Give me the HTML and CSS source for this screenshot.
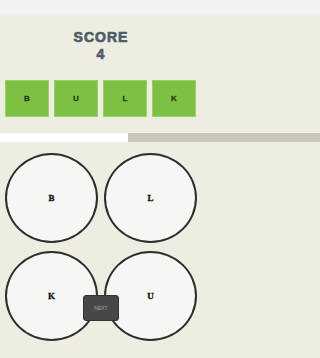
FILE: index.html
```html
<!DOCTYPE html>
<html>
<head>
<meta charset="utf-8">
<link rel="stylesheet" href="styles.css">
</head>
<body>
<div class="app">
  <div class="topbar"></div>
  <div class="score">
    <div class="score-label">SCORE</div>
    <div class="score-value">4</div>
  </div>
  <div class="tiles">
    <div class="tile">B</div>
    <div class="tile">U</div>
    <div class="tile">L</div>
    <div class="tile">K</div>
  </div>
  <div class="progress">
    <div class="progress-fill" style="width:128px"></div>
  </div>
  <div class="board">
    <div class="circle">B</div>
    <div class="circle">L</div>
    <div class="circle">K</div>
    <div class="circle">U</div>
    <div class="next">NEXT</div>
  </div>
</div>
</body>
</html>
```
FILE: styles.css
```css
html, body {
  margin: 0;
  padding: 0;
}
body {
  height: 358px;
  overflow: hidden;
  background: #eeede2;
  font-family: "Liberation Sans", Arial, sans-serif;
}
.app {
  display: flex;
  flex-direction: column;
  height: 358px;
}
.topbar {
  height: 14px;
  background: #f3f2f2;
}
.score {
  width: 202px;
  margin-top: 15px;
  text-align: center;
  color: #4c5d68;
  font-weight: 900;
  font-size: 14px;
  line-height: 17px;
  letter-spacing: 1px;
  -webkit-text-stroke: 0.7px #4c5d68;
}
.tiles {
  margin-top: 17px;
  display: flex;
  gap: 5px;
  padding: 0 5px;
}
.tile {
  width: 44px;
  height: 37px;
  box-sizing: border-box;
  background: #7dc143;
  border: 1px solid #98d061;
  display: flex;
  align-items: center;
  justify-content: center;
  font-size: 8px;
  font-weight: bold;
  color: #2b3a1c;
  -webkit-text-stroke: 0.3px #2b3a1c;
}
.progress {
  margin-top: 16px;
  height: 9px;
  background: #c9c7b9;
  display: flex;
}
.progress-fill {
  background: #ffffff;
  height: 100%;
}
.board {
  position: relative;
  width: 202px;
  box-sizing: border-box;
  margin-top: 11px;
  display: grid;
  grid-template-columns: 93px 93px;
  grid-auto-rows: 90px;
  column-gap: 6px;
  row-gap: 8px;
  padding-left: 5px;
}
.circle {
  box-sizing: border-box;
  border: 2.5px solid #2e2e2e;
  border-radius: 50%;
  background: #f6f6f4;
  display: flex;
  align-items: center;
  justify-content: center;
  font-family: "Liberation Serif", "Times New Roman", serif;
  font-weight: bold;
  font-size: 9px;
  color: #111;
  -webkit-text-stroke: 0.3px #111;
}
.next {
  position: absolute;
  left: 83px;
  top: 142px;
  width: 36px;
  height: 26px;
  box-sizing: border-box;
  background: #474747;
  border: 1px solid #333;
  border-radius: 3px;
  color: #a8a8a8;
  font-size: 5px;
  display: flex;
  align-items: center;
  justify-content: center;
}
```
